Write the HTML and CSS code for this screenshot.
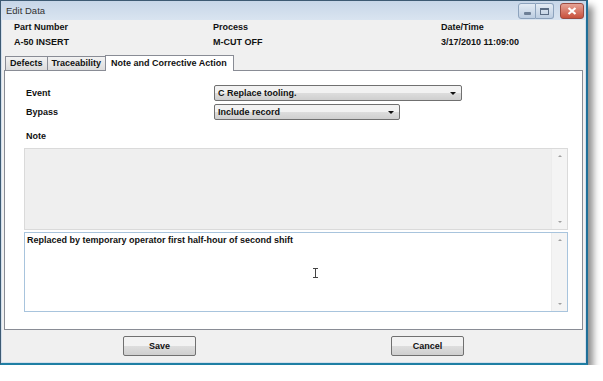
FILE: index.html
```html
<!DOCTYPE html>
<html lang="en">
<head>
    <meta charset="UTF-8">
    <title>Edit Data</title>
    <link rel="stylesheet" href="styles.css">
</head>
<body>
<div class="window">
    <div class="titlebar">
        <span class="title">Edit Data</span>
        <div class="caption-buttons">
            <div class="cap-btn min"><span class="glyph-min"></span></div>
            <div class="cap-btn max"><span class="glyph-max"></span></div>
            <div class="cap-btn close">
                <svg width="10" height="8" viewBox="0 0 10 8">
                    <path d="M1.5 1 L8.5 7 M8.5 1 L1.5 7" stroke="#fff" stroke-width="2.2"/>
                </svg>
            </div>
        </div>
    </div>
    <div class="client">
        <div class="header">
            <div class="field">
                <p class="label">Part Number</p>
                <p class="value">A-50 INSERT</p>
            </div>
            <div class="field">
                <p class="label">Process</p>
                <p class="value">M-CUT OFF</p>
            </div>
            <div class="field">
                <p class="label">Date/Time</p>
                <p class="value">3/17/2010 11:09:00</p>
            </div>
        </div>
        <div class="tabs">
            <div class="tab">Defects</div>
            <div class="tab">Traceability</div>
            <div class="tab active">Note and Corrective Action</div>
        </div>
        <div class="panel">
            <div class="form-row">
                <span class="form-label">Event</span>
                <div class="combo combo-wide">C Replace tooling.<span class="arrow"></span></div>
            </div>
            <div class="form-row">
                <span class="form-label">Bypass</span>
                <div class="combo combo-short">Include record<span class="arrow"></span></div>
            </div>
            <p class="note-label">Note</p>
            <div class="textbox readonly">
                <div class="text"></div>
                <div class="scrollbar"><span class="up"></span><span class="down"></span></div>
            </div>
            <div class="textbox editable">
                <div class="text">Replaced by temporary operator first half-hour of second shift
                    <span class="ibeam"></span>
                </div>
                <div class="scrollbar"><span class="up"></span><span class="down"></span></div>
            </div>
        </div>
        <div class="footer">
            <button class="btn">Save</button>
            <button class="btn">Cancel</button>
        </div>
    </div>
</div>
</body>
</html>
```

FILE: styles.css
```css
/* Reset */
* {
    box-sizing: border-box;
    margin: 0;
    padding: 0;
}

body {
    background-color: #fff;
    font-family: 'Liberation Sans', Arial, sans-serif;
    font-size: 9px;
    font-weight: bold;
    color: #111;
}

/* Window frame */
.window {
    width: 588px;
    height: 365px;
    display: flex;
    flex-direction: column;
    background-color: #d3dfec;
    border: 1px solid #3d5a73;
    border-right: 2px solid #1f6f98;
    border-bottom: 2px solid #1f7fa4;
    box-shadow: 5px 6px 7px rgba(0, 0, 0, 0.45);
}

.titlebar {
    height: 19px;
    display: flex;
    align-items: center;
    justify-content: space-between;
    padding-left: 5px;
    background: linear-gradient(to bottom, #c7d6e8, #d9e4f0);
}

.title {
    font-weight: normal;
    font-size: 9.5px;
    color: #333;
}

.caption-buttons {
    display: flex;
    align-items: flex-start;
    align-self: flex-start;
    padding-top: 2px;
    padding-right: 2px;
}

.cap-btn {
    height: 16px;
    display: flex;
    align-items: center;
    justify-content: center;
    border: 1px solid #8da3bd;
    background: linear-gradient(to bottom, #e3ebf4, #bccde1);
}

.cap-btn.min {
    width: 18px;
    border-radius: 3px 0 0 3px;
}

.cap-btn.max {
    width: 18px;
    border-left: none;
    margin-right: 6px;
    border-radius: 0 3px 3px 0;
}

.cap-btn.close {
    width: 24px;
    border-color: #9a4a40;
    border-radius: 3px;
    background: linear-gradient(to bottom, #e6a396, #c8503c);
}

.glyph-min {
    width: 7px;
    height: 3px;
    margin-top: 4px;
    background-color: #6d7f96;
    border-radius: 1px;
}

.glyph-max {
    width: 9px;
    height: 7px;
    border: 1px solid #5a6c84;
    border-top-width: 2px;
}

/* Client area */
.client {
    flex: 1;
    display: flex;
    flex-direction: column;
    margin: 0 1px 1px 1px;
    background-color: #f0f0f0;
}

.header {
    height: 35px;
    display: grid;
    grid-template-columns: 199px 228px 1fr;
    padding: 0 0 0 12px;
}

.field p {
    line-height: 15px;
}

.tabs {
    display: flex;
    align-items: flex-end;
    height: 15px;
    padding-left: 3px;
    position: relative;
    z-index: 1;
}

.tab {
    height: 14px;
    line-height: 13px;
    padding: 0 4px;
    border: 1px solid #898c95;
    border-bottom: none;
    background: linear-gradient(to bottom, #f2f2f2, #dcdcdc);
    margin-right: -1px;
}

.tab.active {
    height: 16px;
    line-height: 14px;
    background-color: #fff;
    background-image: none;
    margin-bottom: -1px;
    padding: 0 6px 0 5px;
}

.panel {
    height: 260px;
    margin: 0 2px 0 2px;
    border: 1px solid #898c95;
    background-color: #fff;
    padding: 12px 14px 0 19px;
}

.form-row {
    display: flex;
    align-items: center;
    height: 19px;
}

.form-label {
    width: 190px;
    padding-left: 2px;
}

.combo {
    position: relative;
    height: 16px;
    line-height: 14px;
    padding-left: 3px;
    border: 1px solid #707070;
    border-radius: 2px;
    background: linear-gradient(to bottom, #f2f2f2 50%, #dddddd 51%, #cfcfcf);
}

.combo-wide {
    width: 248px;
}

.combo-short {
    width: 186px;
}

.arrow {
    position: absolute;
    right: 5px;
    top: 6px;
    border-left: 3px solid transparent;
    border-right: 3px solid transparent;
    border-top: 3px solid #111;
}

.note-label {
    margin: 8px 0 0 2px;
    height: 19px;
    line-height: 14px;
}

.textbox {
    display: flex;
    border: 1px solid #ccd4dc;
}

.textbox.readonly {
    height: 82px;
    background-color: #efefef;
    border-color: #dadada;
    margin-bottom: 2px;
}

.textbox.editable {
    height: 80px;
    background-color: #fff;
    border-color: #a8c4dd;
}

.text {
    flex: 1;
    position: relative;
    padding: 2px 0 0 2px;
}

.ibeam {
    position: absolute;
    left: 288px;
    top: 35px;
    width: 5px;
    height: 10px;
    border-top: 1px solid #444;
    border-bottom: 1px solid #444;
}

.ibeam::after {
    content: '';
    position: absolute;
    left: 2px;
    top: 0;
    width: 1px;
    height: 8px;
    background-color: #444;
}

.scrollbar {
    width: 16px;
    display: flex;
    flex-direction: column;
    justify-content: space-between;
    align-items: center;
    padding: 6px 0 6px;
    background-color: #f4f4f4;
    border-left: 1px solid #ececec;
}

.up {
    border-left: 2px solid transparent;
    border-right: 2px solid transparent;
    border-bottom: 2px solid #a0a0a0;
}

.down {
    border-left: 2px solid transparent;
    border-right: 2px solid transparent;
    border-top: 2px solid #a0a0a0;
}

/* Footer buttons */
.footer {
    flex: 1;
    display: flex;
    align-items: center;
    padding-left: 121px;
    gap: 195px;
}

.btn {
    width: 73px;
    height: 20px;
    font-family: inherit;
    font-size: 9px;
    font-weight: bold;
    color: #111;
    border: 1px solid #707070;
    border-radius: 2px;
    background: linear-gradient(to bottom, #f2f2f2 50%, #dddddd 51%, #cfcfcf);
}
```
